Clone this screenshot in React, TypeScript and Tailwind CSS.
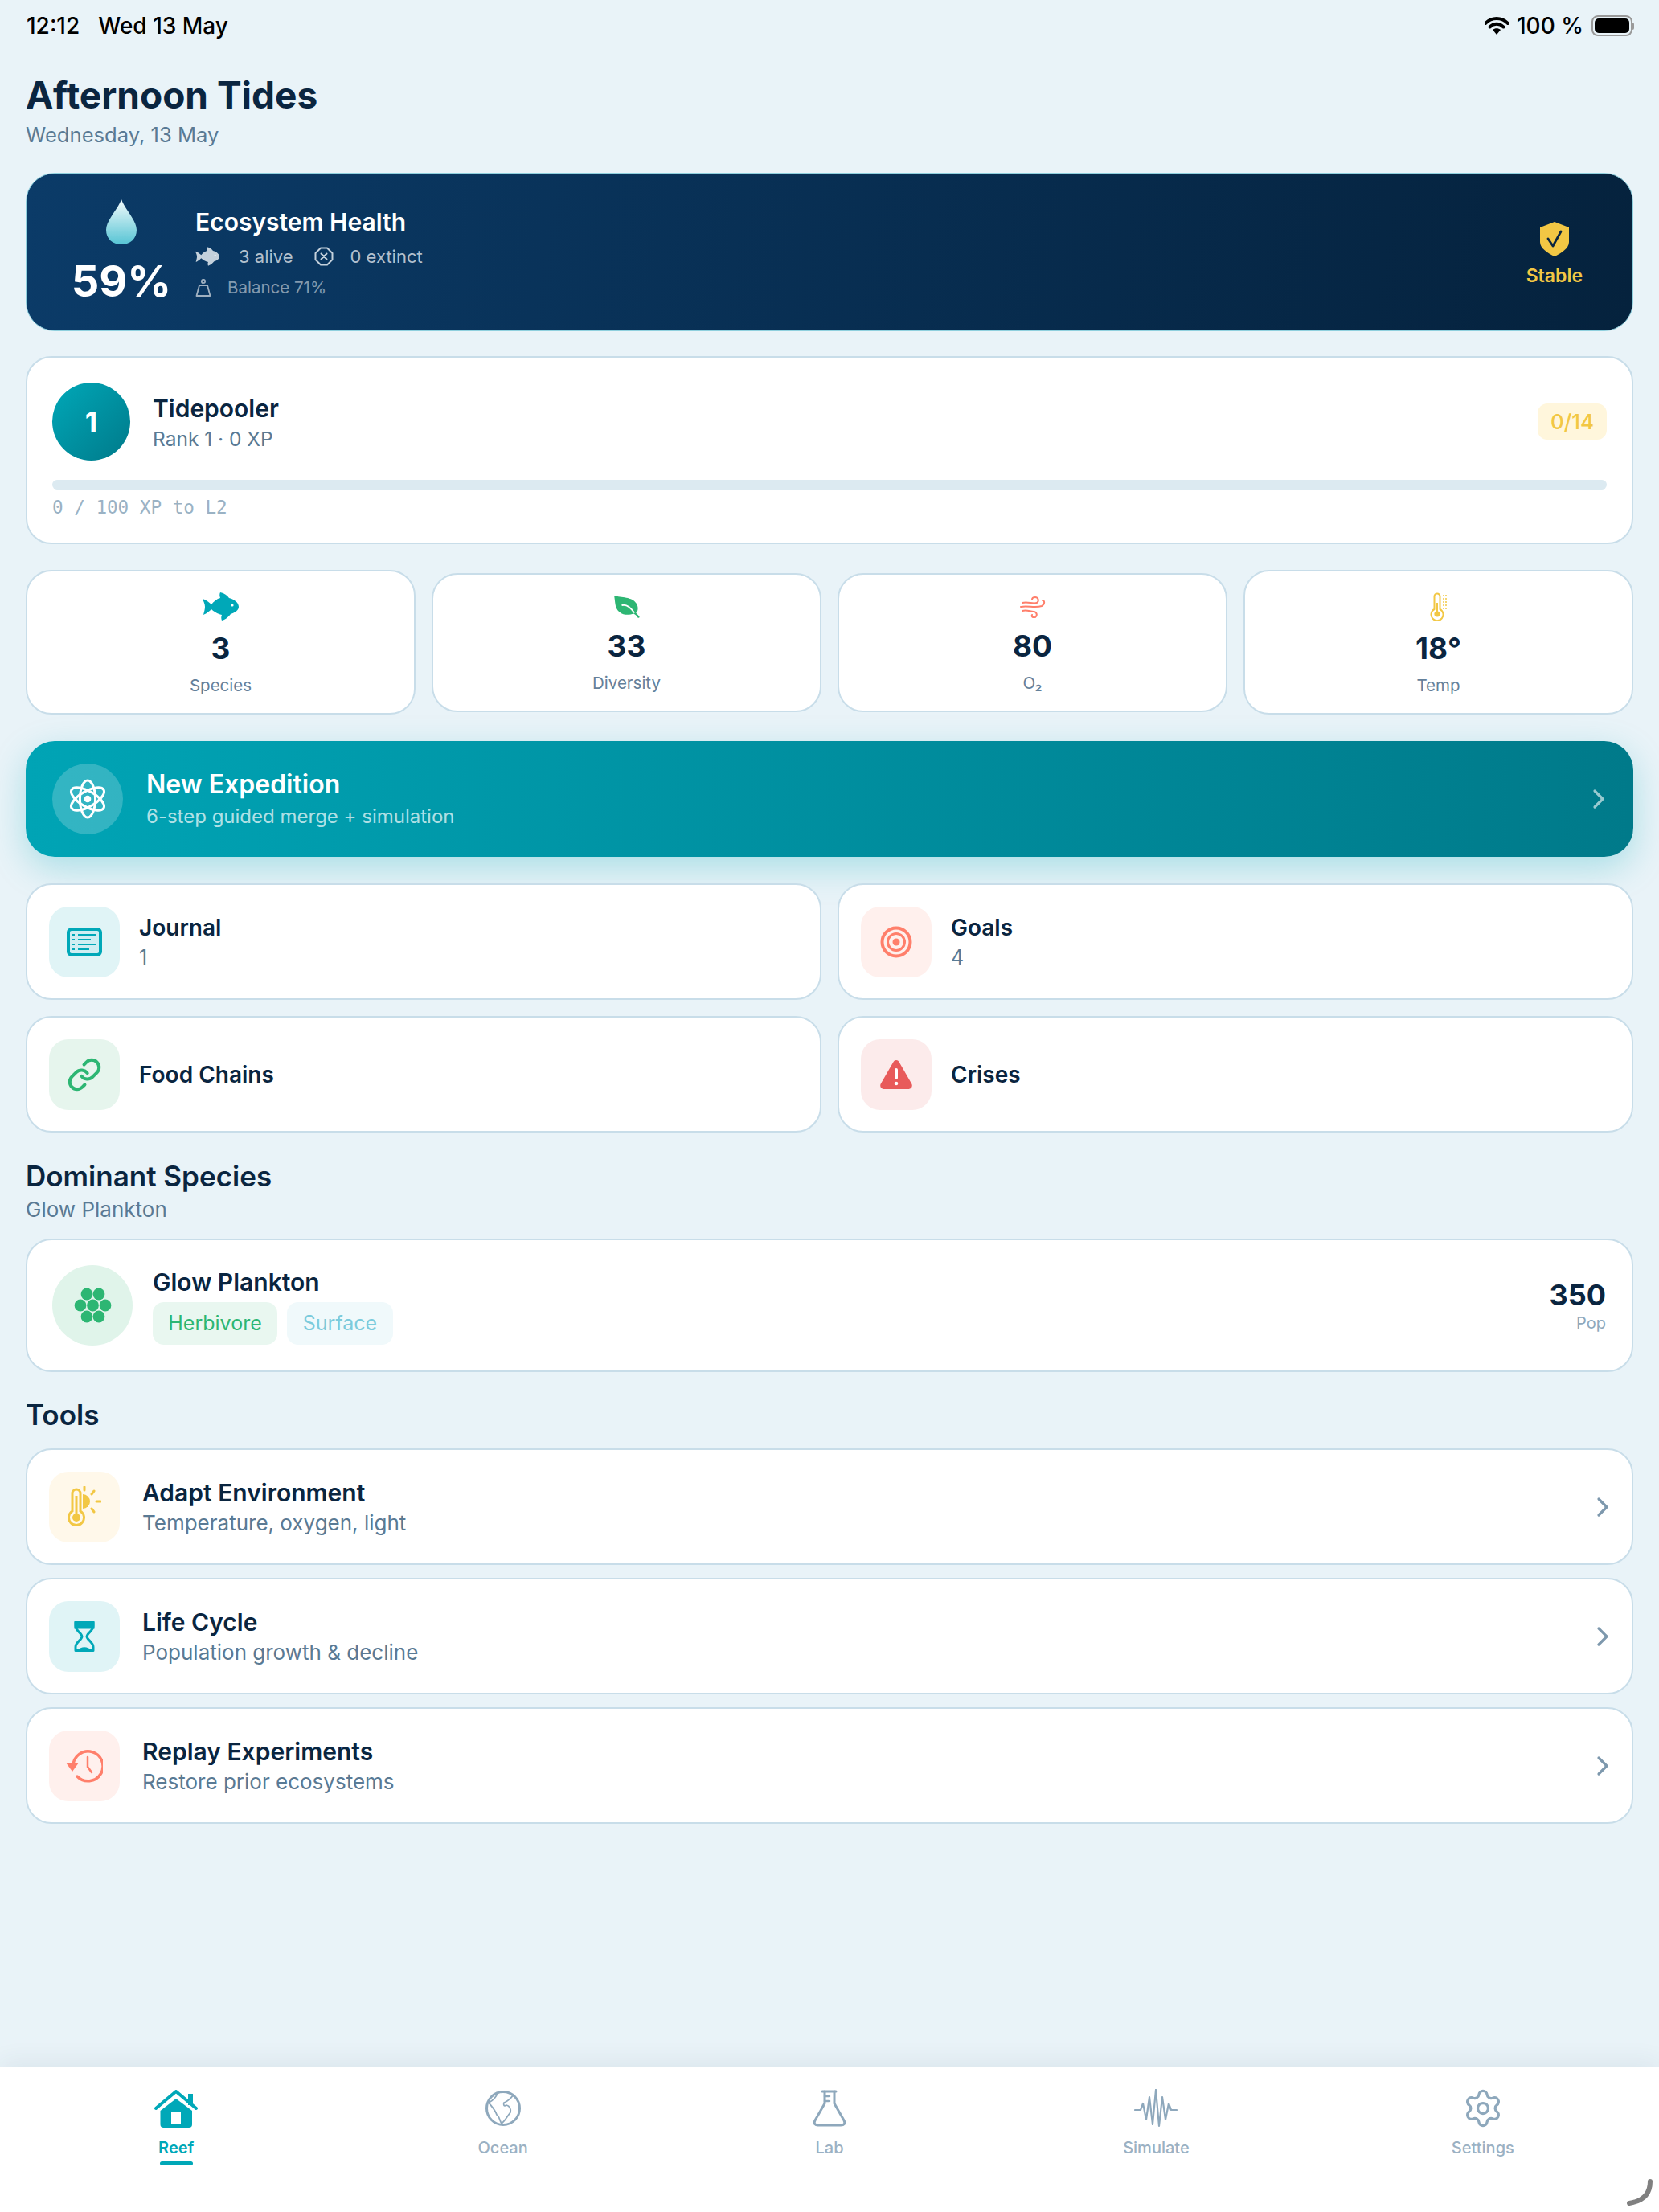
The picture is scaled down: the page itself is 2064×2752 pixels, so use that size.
import * as React from "react"
import { Link, Settings } from "lucide-react"

function Wifi() {
  return (
    <svg width="30" height="22" viewBox="0 0 30 22">
      <path d="M1 8 C9 0 21 0 29 8" fill="none" stroke="#000" strokeWidth="4" strokeLinecap="round" />
      <path d="M6.5 12.5 C11.5 7.5 18.500 7.500 23.500 12.500" fill="none" stroke="#000" strokeWidth="4" strokeLinecap="round" />
      <path d="M10 16 C13 13.500 17 13.500 20 16 L15 22 Z" fill="#000" />
    </svg>
  )
}

function Battery() {
  return (
    <div className="flex items-center">
      <div className="w-[51px] h-[26px] rounded-[8px] border-2 border-[#9a9a9a] p-[2px]">
        <div className="w-full h-full rounded-[5px] bg-black" />
      </div>
      <div className="w-[2px] h-[9px] rounded-r bg-[#9a9a9a]" />
    </div>
  )
}

function Drop() {
  return (
    <svg width="40" height="58" viewBox="0 0 40 56">
      <defs>
        <linearGradient id="dropFill" x1="0" y1="0" x2="0" y2="1">
          <stop offset="0" stopColor="#f4fbfc" />
          <stop offset="1" stopColor="#56c4d4" />
        </linearGradient>
      </defs>
      <path d="M20 0 C24 12 39 26 39 38 C39 49 31 56 20 56 C9 56 1 49 1 38 C1 26 16 12 20 0 Z" fill="url(#dropFill)" />
    </svg>
  )
}

function Fish({ color, width, height }: { color: string; width: number; height: number }) {
  return (
    <svg width={width} height={height} viewBox="0 0 45 35">
      <path
        d="M0 8 C4 9 8 12 11 15 C14 11 18 8 22 7 C21 4 21 2 22 0 C27 1 31 4 33 7 C40 9 45 13 45 18 C45 22 41 25 35 27 C32 31 28 34 24 35 C23 33 23 30 24 28 C19 27 14 24 11 21 C8 24 4 27 1 28 C2 24 3 21 3 18 C3 14 1 11 0 8 Z"
        fill={color}
      />
      <circle cx="37" cy="16" r="1.600" fill="#fff" />
    </svg>
  )
}

function Leaf() {
  return (
    <svg width="36" height="28" viewBox="0 0 36 30">
      <path
        d="M1 0 C10 3 25 1 31 11 C34 17 32 22 30 23 C32 25 34 27 35 29 L33 30 C31 27 29 25 27 24 C19 27 8 26 4 17 C2 12 2 6 1 0 Z"
        fill="#2db673"
      />
      <path d="M11 13 C17 11 23 16 28 23" fill="none" stroke="#fff" strokeWidth="2" />
    </svg>
  )
}

function Wind() {
  return (
    <svg width="34" height="28" viewBox="0 0 32 28" fill="none" stroke="#ff7f6b" strokeWidth="2" strokeLinecap="round">
      <path d="M3 9 C10 7 16 11 21 9 C24 7 23 2 19 2 C17 2 15 3 15 5" />
      <path d="M1 14 C10 12 18 16 27 13 C31 11 31 6 28 6" />
      <path d="M3 19 C8 17 13 20 17 20 C21 20 22 25 19 27 C16 28 14 26 15 24" />
    </svg>
  )
}

function Thermo() {
  return (
    <svg width="22" height="35" viewBox="0 0 22 35" fill="none" stroke="#f2c744">
      <path d="M5.500 5 a3.500 3.500 0 0 1 7 0 V21 a7.500 7.500 0 1 1 -7 0 Z" strokeWidth="2" />
      <circle cx="9" cy="27" r="3.600" fill="#f2c744" stroke="none" />
      <path d="M9 26 V13" strokeWidth="2" />
      <path d="M16 4 H21 M16 8 H21 M16 12 H21 M16 16 H21 M16 20 H21" strokeWidth="1.500" strokeDasharray="2 1" />
    </svg>
  )
}

function Atom() {
  return (
    <svg width="46" height="50" viewBox="0 0 48 52" fill="none" stroke="#fff" strokeWidth="3.200">
      <ellipse cx="24" cy="26" rx="10" ry="24" />
      <ellipse cx="24" cy="26" rx="10" ry="24" transform="rotate(60 24 26)" />
      <ellipse cx="24" cy="26" rx="10" ry="24" transform="rotate(120 24 26)" />
      <circle cx="24" cy="26" r="4.500" fill="#fff" stroke="none" />
    </svg>
  )
}

function Journal() {
  return (
    <svg width="44" height="36" viewBox="0 0 44 36">
      <rect x="2" y="2" width="40" height="32" rx="4" fill="#cfeef2" stroke="#00a8b8" strokeWidth="4" />
      <g stroke="#00a8b8" strokeWidth="2">
        <path d="M14 9 H36 M14 15 H30 M14 21 H36 M14 27 H28" />
        <path d="M7 9 H10 M7 15 H10 M7 21 H10 M7 27 H10" />
      </g>
    </svg>
  )
}

function Target() {
  return (
    <svg width="40" height="40" viewBox="0 0 40 40" fill="none" stroke="#ff7f6b">
      <circle cx="20" cy="20" r="17.500" strokeWidth="4" />
      <circle cx="20" cy="20" r="10.500" strokeWidth="3" />
      <circle cx="20" cy="20" r="4.500" fill="#ff7f6b" stroke="none" />
    </svg>
  )
}

function Warning() {
  return (
    <svg width="40" height="37" viewBox="0 0 40 37">
      <path d="M20 1 C22 1 23 2 24 4 L39 30 C41 33 39 37 35 37 H5 C1 37 -1 33 1 30 L16 4 C17 2 18 1 20 1 Z" fill="#e85a5a" />
      <rect x="18" y="11" width="4" height="14" rx="2" fill="#fff" />
      <circle cx="20" cy="30" r="2.300" fill="#fff" />
    </svg>
  )
}

function Plankton() {
  return (
    <svg width="47" height="44" viewBox="0 0 47 44" fill="#2db673">
      <circle cx="16" cy="8" r="7.400" />
      <circle cx="31" cy="8" r="7.400" />
      <circle cx="8" cy="22" r="7.400" />
      <circle cx="23.500" cy="22" r="7.400" />
      <circle cx="39" cy="22" r="7.400" />
      <circle cx="16" cy="36" r="7.400" />
      <circle cx="31" cy="36" r="7.400" />
    </svg>
  )
}

function ThermoSun() {
  return (
    <svg width="42" height="52" viewBox="0 0 42 52" fill="none" stroke="#f2c744">
      <path d="M6 9 a5 5 0 0 1 10 0 V31 a9.500 9.500 0 1 1 -10 0 Z" strokeWidth="3" />
      <circle cx="11" cy="39" r="5" fill="#f2c744" stroke="none" />
      <path d="M11 36 V12" strokeWidth="3" />
      <path d="M19 10 A9 9 0 0 1 19 28 Z" fill="#f2c744" stroke="none" />
      <path d="M21 1 V5 M33 6 L30 10 M41 19 H36 M33 32 L30 28" strokeWidth="3" strokeLinecap="round" />
    </svg>
  )
}

function Hourglass() {
  return (
    <svg width="26" height="38" viewBox="0 0 26 38" fill="none" stroke="#00a8b8" strokeWidth="3">
      <path d="M2 1.500 H24 V6 C24 12 16 15 16 19 C16 23 24 26 24 32 V36.500 H2 V32 C2 26 10 23 10 19 C10 15 2 12 2 6 Z" strokeLinejoin="round" />
      <path d="M2 1.500 H24 V8 H2 Z" fill="#00a8b8" />
      <path d="M5 36 C8 31 18 31 21 36 Z" fill="#00a8b8" stroke="none" />
    </svg>
  )
}

function Replay() {
  return (
    <svg width="46" height="42" viewBox="0 0 46 42" fill="none" stroke="#ff7f6b" strokeWidth="3.500" strokeLinecap="round">
      <path d="M9 21 A18.500 18.500 0 1 1 14 34" />
      <path d="M0 17 H16 L8 28 Z" fill="#ff7f6b" stroke="none" />
      <path d="M27 10 V22 L32 29" strokeWidth="2.500" />
    </svg>
  )
}

function Chevron({ color }: { color: string }) {
  return (
    <svg width="16" height="26" viewBox="0 0 16 26" fill="none" stroke={color} strokeWidth="3.200" strokeLinecap="round" strokeLinejoin="round">
      <path d="M3 3 L13 13 L3 23" />
    </svg>
  )
}

function HomeIcon() {
  return (
    <svg width="54" height="47" viewBox="0 0 54 47">
      <rect x="42" y="5" width="6" height="14" fill="#00a8b8" />
      <path d="M2 23 L27 2 L52 23" fill="none" stroke="#00a8b8" strokeWidth="4" strokeLinecap="round" strokeLinejoin="round" />
      <path d="M7.500 26 L27 11 L47 26 V43 a4 4 0 0 1 -4 4 H11.500 a4 4 0 0 1 -4 -4 Z" fill="#00a8b8" />
      <rect x="21" y="28" width="12" height="15" fill="#fff" />
    </svg>
  )
}

function GlobeIcon() {
  return (
    <svg width="44" height="44" viewBox="0 0 44 44" fill="none" stroke="#8ea8bc">
      <circle cx="22" cy="22" r="20.500" strokeWidth="3" />
      <path d="M15 3 C13 9 8 13 4 15 C8 20 12 24 14 30 C17 31 17 36 20 41 C24 38 27 32 31 27 C32 23 30 19 26 18 C23 20 22 18 23 15 C27 14 33 8 34 6" strokeWidth="1.800" />
    </svg>
  )
}

function FlaskIcon() {
  return (
    <svg width="42" height="46" viewBox="0 0 42 46" fill="none" stroke="#8ea8bc" strokeWidth="3" strokeLinejoin="round" strokeLinecap="round">
      <path d="M12 2 H29" />
      <path d="M15 2 V17 L3 38 C1 42 3 44 7 44 H35 C39 44 41 42 39 38 L27 17 V2" />
      <path d="M15 8 H21 M15 14 H21" strokeWidth="2.500" />
    </svg>
  )
}

function WaveIcon() {
  return (
    <svg width="54" height="48" viewBox="0 0 54 48" fill="none" stroke="#8ea8bc" strokeWidth="2.200" strokeLinejoin="round" strokeLinecap="round">
      <path d="M1 26 H8 L11 18 L15 38 L19 10 L23 44 L27 1 L31 46 L35 10 L39 38 L43 18 L46 26 H53" />
    </svg>
  )
}

function Stat({ icon, iconBox, value, label }: { icon: React.ReactNode; iconBox: string; value: string; label: string }) {
  return (
    <div className="flex flex-col items-center rounded-[32px] border-2 border-[#c8dde9] bg-white pt-[26px] pb-[20px]">
      <div className={`${iconBox} flex items-center justify-center`}>{icon}</div>
      <div className="mt-[13px] text-[37px] leading-[44px] font-bold text-[#0a2540]">{value}</div>
      <div className="mt-[10px] text-[20.500px] leading-[28px] text-[#64809a]">{label}</div>
    </div>
  )
}

function NavCard({ icon, tile, title, sub }: { icon: React.ReactNode; tile: string; title: string; sub?: string }) {
  return (
    <div className="flex h-[145px] items-center rounded-[32px] border-2 border-[#c8dde9] bg-white px-[27px]">
      <div className={`${tile} flex h-[88px] w-[88px] shrink-0 items-center justify-center rounded-[24px]`}>{icon}</div>
      <div className="ml-[24px]">
        <div className="text-[28px] leading-[38px] font-semibold text-[#0a2540]">{title}</div>
        {sub && <div className="text-[25px] leading-[36px] text-[#5a7a94]">{sub}</div>}
      </div>
    </div>
  )
}

function ToolCard({ icon, tile, title, sub }: { icon: React.ReactNode; tile: string; title: string; sub: string }) {
  return (
    <div className="flex h-[145px] items-center rounded-[32px] border-2 border-[#c8dde9] bg-white pl-[27px] pr-[28px]">
      <div className={`${tile} flex h-[88px] w-[88px] shrink-0 items-center justify-center rounded-[24px]`}>{icon}</div>
      <div className="ml-[28px] flex-1">
        <div className="text-[30px] leading-[40px] font-semibold text-[#0a2540]">{title}</div>
        <div className="text-[26px] leading-[36px] text-[#5a7a94]">{sub}</div>
      </div>
      <Chevron color="#7d98ad" />
    </div>
  )
}

function Tab({ icon, label, active }: { icon: React.ReactNode; label: string; active?: boolean }) {
  return (
    <div className="flex flex-1 flex-col items-center">
      <div className="flex h-[48px] items-center justify-center">{icon}</div>
      <div className={`mt-[11px] text-[20px] leading-[28px] ${active ? "font-semibold text-[#00a8b8]" : "font-medium text-[#9bb1c3]"}`}>
        {label}
      </div>
      {active && <div className="mt-[3px] h-[5px] w-[41px] rounded-full bg-[#00a8b8]" />}
    </div>
  )
}

export default function App() {
  return (
    <div className="relative flex h-[2752px] w-[2064px] flex-col overflow-hidden bg-[#e9f3f8] font-[Inter,sans-serif]">
      {/* status bar */}
      <div className="flex h-[64px] items-center justify-between pl-[33px] pr-[31px] text-[28px] font-medium text-black">
        <div className="flex gap-[23px]">
          <span>12:12</span>
          <span>Wed 13 May</span>
        </div>
        <div className="flex items-center gap-[10px]">
          <Wifi />
          <span>100 %</span>
          <Battery />
        </div>
      </div>

      <main className="flex-1 px-[32px]">
        <h1 className="mt-[24px] text-[46px] leading-[60px] font-bold text-[#0a2540]">Afternoon Tides</h1>
        <p className="mt-[2px] text-[25.600px] leading-[36px] text-[#5a7a94]">Wednesday, 13 May</p>

        {/* ecosystem health */}
        <div className="mt-[29px] flex h-[197px] items-center rounded-[36px] border-[1.500px] border-[#8fd0de] bg-[linear-gradient(100deg,#0b3b68,#05223d)] pl-[57px] pr-[62px]">
          <div className="flex w-[122px] flex-col items-center">
            <Drop />
            <div className="mt-[14px] text-[54px] leading-[62px] font-bold text-white">59%</div>
          </div>
          <div className="ml-[31px] flex-1">
            <div className="text-[30px] leading-[40px] font-semibold text-white">Ecosystem Health</div>
            <div className="mt-[8px] flex items-center text-[22px] leading-[30px] text-white/70">
              <Fish color="#c4d1dc" width={30} height={24} />
              <span className="ml-[24px]">3 alive</span>
              <svg className="ml-[26px]" width="24" height="24" viewBox="0 0 24 24" fill="none" stroke="#c4d1dc" strokeWidth="2" strokeLinecap="round">
                <path d="M8 1.500 H16 L22.500 8 V16 L16 22.500 H8 L1.500 16 V8 Z" strokeLinejoin="round" />
                <path d="M8.500 8.500 L15.500 15.500 M15.500 8.500 L8.500 15.500" />
              </svg>
              <span className="ml-[21px]">0 extinct</span>
            </div>
            <div className="mt-[10px] flex items-center text-[20.500px] leading-[28px] text-white/50">
              <svg width="20" height="22" viewBox="0 0 20 22" fill="none" stroke="#9fb0c0" strokeWidth="1.800">
                <circle cx="10" cy="3" r="2.200" />
                <path d="M5 8 H15 L18.500 21 H1.500 Z" strokeLinejoin="round" />
              </svg>
              <span className="ml-[20px]">Balance 71%</span>
            </div>
          </div>
          <div className="mt-[8px] flex flex-col items-center">
            <svg width="36" height="43" viewBox="0 0 36 43">
              <path d="M18 0 L36 7 V25 C36 33 26 39 18 43 C10 39 0 33 0 25 V7 Z" fill="#f2c744" />
              <path d="M10 21 L16 30 L26 12" fill="none" stroke="#0a2540" strokeWidth="2.800" strokeLinecap="round" strokeLinejoin="round" />
            </svg>
            <div className="mt-[8px] text-[23px] leading-[32px] font-semibold text-[#f2c744]">Stable</div>
          </div>
        </div>

        {/* rank */}
        <div className="mt-[31px] h-[234px] rounded-[32px] border-2 border-[#c8dde9] bg-white px-[31px] pt-[31px]">
          <div className="flex items-center">
            <div className="flex h-[97px] w-[97px] items-center justify-center rounded-full bg-linear-to-br from-[#00a8b8] to-[#007a8a] text-[36px] font-bold text-white">1</div>
            <div className="ml-[28px] flex-1">
              <div className="text-[30px] leading-[40px] font-semibold text-[#0a2540]">Tidepooler</div>
              <div className="mt-[2px] text-[24.500px] leading-[32px] text-[#5a7a94]">Rank 1 · 0 XP</div>
            </div>
            <div className="flex h-[45px] w-[86px] items-center justify-center rounded-[12px] bg-[#fff6dc] text-[26px] font-medium text-[#f2c744]">0/14</div>
          </div>
          <div className="mt-[24px] h-[12px] rounded-full bg-[#dceaf1]" />
          <div className="mt-[8px] font-['DejaVu_Sans_Mono',monospace] text-[22.600px] leading-[28px] text-[#9ab2c4]">0 / 100 XP to L2</div>
        </div>

        {/* stats */}
        <div className="mt-[32px] grid grid-cols-4 items-center gap-x-[20px]">
          <Stat icon={<Fish color="#00a8b8" width={45} height={35} />} iconBox="h-[35px]" value="3" label="Species" />
          <Stat icon={<Leaf />} iconBox="h-[28px]" value="33" label="Diversity" />
          <Stat icon={<Wind />} iconBox="h-[28px]" value="80" label="O₂" />
          <Stat icon={<Thermo />} iconBox="h-[35px]" value="18°" label="Temp" />
        </div>

        {/* expedition */}
        <div className="mt-[33px] flex h-[144px] items-center rounded-[36px] bg-linear-to-r from-[#00a4b5] to-[#007a8a] pl-[33px] pr-[35px] shadow-[0_14px_44px_rgba(0,168,184,0.28)]">
          <div className="flex h-[88px] w-[88px] items-center justify-center rounded-full bg-white/20">
            <Atom />
          </div>
          <div className="ml-[29px] flex-1">
            <div className="text-[32px] leading-[42px] font-semibold text-white">New Expedition</div>
            <div className="mt-[2px] text-[24px] leading-[34px] text-white/70">6-step guided merge + simulation</div>
          </div>
          <Chevron color="rgba(255,255,255,0.6)" />
        </div>

        {/* shortcuts */}
        <div className="mt-[33px] grid grid-cols-2 gap-[20px]">
          <NavCard icon={<Journal />} tile="bg-[#e0f4f6]" title="Journal" sub="1" />
          <NavCard icon={<Target />} tile="bg-[#fff0ed]" title="Goals" sub="4" />
          <NavCard icon={<Link size={44} strokeWidth={2.200} color="#2db673" />} tile="bg-[#e6f5ed]" title="Food Chains" />
          <NavCard icon={<Warning />} tile="bg-[#fcebeb]" title="Crises" />
        </div>

        {/* dominant species */}
        <h2 className="mt-[32px] text-[35px] leading-[44px] font-semibold text-[#0a2540]">Dominant Species</h2>
        <p className="mt-[2px] text-[26px] leading-[36px] text-[#5a7a94]">Glow Plankton</p>
        <div className="mt-[18px] flex h-[166px] items-center rounded-[32px] border-2 border-[#c8dde9] bg-white pl-[31px] pr-[32px]">
          <div className="flex h-[100px] w-[100px] items-center justify-center rounded-full bg-[#e0f4ea]">
            <Plankton />
          </div>
          <div className="ml-[25px] flex-1">
            <div className="text-[30px] leading-[40px] font-semibold text-[#0a2540]">Glow Plankton</div>
            <div className="mt-[5px] flex gap-[12px] text-[25px]">
              <span className="flex h-[53px] w-[155px] items-center justify-center rounded-[14px] bg-[#e9f7f0] text-[#2db673]">Herbivore</span>
              <span className="flex h-[53px] w-[132px] items-center justify-center rounded-[14px] bg-[#f0f9fb] text-[#7ccbdc]">Surface</span>
            </div>
          </div>
          <div className="flex flex-col items-end">
            <div className="text-[36px] leading-[44px] font-bold text-[#0a2540]">350</div>
            <div className="text-[20px] leading-[26px] text-[#8ea8bc]">Pop</div>
          </div>
        </div>

        {/* tools */}
        <h2 className="mt-[31px] text-[35px] leading-[44px] font-semibold text-[#0a2540]">Tools</h2>
        <div className="mt-[20px] flex flex-col gap-[16px]">
          <ToolCard icon={<ThermoSun />} tile="bg-[#fff8ea]" title="Adapt Environment" sub="Temperature, oxygen, light" />
          <ToolCard icon={<Hourglass />} tile="bg-[#e0f4f6]" title="Life Cycle" sub="Population growth & decline" />
          <ToolCard icon={<Replay />} tile="bg-[#fff0ed]" title="Replay Experiments" sub="Restore prior ecosystems" />
        </div>
      </main>

      {/* tab bar */}
      <nav className="flex h-[181px] bg-white px-[16px] pt-[28px] shadow-[0_-6px_28px_rgba(40,60,80,0.07)]">
        <Tab icon={<HomeIcon />} label="Reef" active />
        <Tab icon={<GlobeIcon />} label="Ocean" />
        <Tab icon={<FlaskIcon />} label="Lab" />
        <Tab icon={<WaveIcon />} label="Simulate" />
        <Tab icon={<Settings size={52} strokeWidth={1.500} color="#8ea8bc" />} label="Settings" />
      </nav>

      {/* corner grab handle */}
      <svg className="absolute right-[7px] top-[2711px]" width="34" height="33" viewBox="0 0 34 33" fill="none" stroke="#808080" strokeWidth="6" strokeLinecap="round">
        <path d="M30 3 C30 16 24 27 4 30" />
      </svg>
    </div>
  )
}
